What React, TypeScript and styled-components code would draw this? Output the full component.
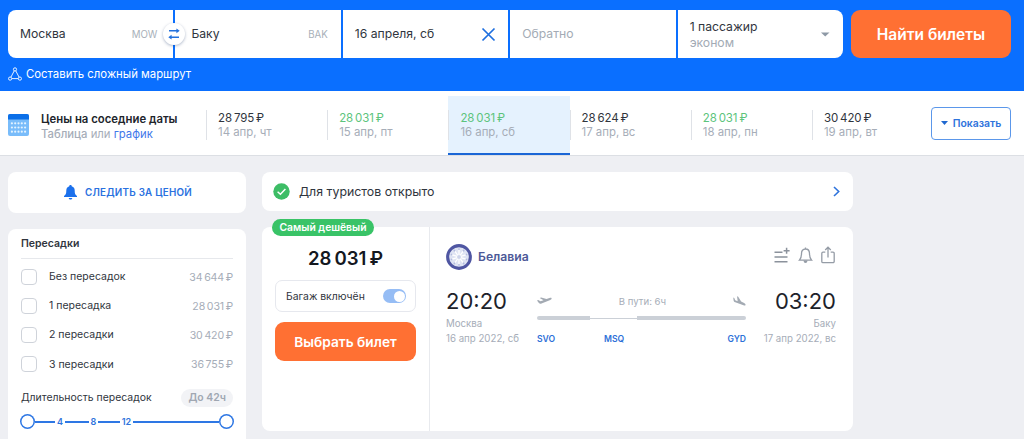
import React from "react";
import styled, { createGlobalStyle } from "styled-components";

const Global = createGlobalStyle`
  * { box-sizing: border-box; }
  html, body { margin: 0; height: 439px; overflow: hidden; background: #eeeff3; }
  body { font-family: Inter, "Liberation Sans", sans-serif; color: #30353d; }
  svg { display: block; flex: none; }
`;

const Page = styled.div`
  width: 1024px;
  height: 439px;
  overflow: hidden;
`;

const Header = styled.header`
  height: 91px;
  background: #0a6fff;
  padding: 10px 13px 0 8px;
`;

const SearchRow = styled.div`
  display: flex;
  gap: 8px;
  height: 48px;
`;

const FormWrap = styled.div`
  position: relative;
  height: 48px;
`;

const Form = styled.div`
  display: flex;
  gap: 2px;
  width: 835px;
  height: 48px;
  border-radius: 8px;
  overflow: hidden;
`;

const Field = styled.div`
  flex: 1 1 0;
  display: flex;
  align-items: center;
  justify-content: space-between;
  background: #fff;
  padding: 0 12px;
  font-size: 12.2px;
`;

const FieldText = styled.span<{ $muted?: boolean; $indent?: number }>`
  color: ${(p) => (p.$muted ? "#a3abb5" : "#30353d")};
  padding-left: ${(p) => p.$indent ?? 0}px;
  line-height: 16px;
  white-space: nowrap;
`;

const Code = styled.span<{ $inset: number }>`
  font-size: 9.7px;
  color: #a8b0b9;
  padding-right: ${(p) => p.$inset}px;
`;

const Passengers = styled.div`
  display: flex;
  flex-direction: column;
  padding-top: 1px;
`;

const Swap = styled.div`
  position: absolute;
  left: 155px;
  top: 13px;
  width: 22px;
  height: 22px;
  border-radius: 50%;
  background: #fff;
  box-shadow: 0 1px 3px rgba(20, 50, 100, 0.35);
  display: flex;
  align-items: center;
  justify-content: center;
`;

const OrangeButton = styled.button<{ $w: number; $h: number; $size: number }>`
  width: ${(p) => p.$w}px;
  height: ${(p) => p.$h}px;
  flex: none;
  border: 0;
  padding: 0;
  border-radius: 9px;
  background: #ff7033;
  color: #fff;
  font: 600 ${(p) => p.$size}px Inter, sans-serif;
`;

const ComplexRoute = styled.div`
  display: flex;
  align-items: center;
  gap: 4px;
  height: 16px;
  margin-top: 8px;
  color: #fff;
  font-size: 11.35px;
`;

const PriceBar = styled.section`
  display: flex;
  height: 65px;
  background: #fff;
  border-bottom: 1px solid #dcdfe4;
  padding: 5px 13px 0 8px;
`;

const PriceIntro = styled.div`
  display: flex;
  width: 198px;
  gap: 12px;
  padding-top: 15px;
`;

const CalendarWrap = styled.div`
  padding-top: 3px;
`;

const IntroTitle = styled.div`
  font-size: 11.35px;
  font-weight: 600;
  line-height: 16px;
  color: #20242b;
  white-space: nowrap;
`;

const IntroSub = styled.div`
  font-size: 11.3px;
  line-height: 15px;
  color: #a6adb8;
  b { font-weight: 500; }
  a { color: #3f78ea; }
`;

const Days = styled.div`
  display: flex;
  width: 725px;
`;

const Day = styled.div<{ $active?: boolean }>`
  width: 121.2px;
  flex: none;
  height: 59px;
  padding-top: 14px;
  background: ${(p) => (p.$active ? "#e5f2fe" : "transparent")};
  border-bottom: ${(p) => (p.$active ? "2px solid #1a66d6" : "0")};
`;

const DayInner = styled.div`
  height: 30px;
  border-left: 1px solid #dfe2e7;
  padding: 1px 0 0 11px;
`;

const DayPrice = styled.div<{ $cheap?: boolean }>`
  font-size: 11.5px;
  line-height: 14px;
  letter-spacing: -0.1px;
  color: ${(p) => (p.$cheap ? "#5cc47c" : "#30353d")};
`;

const DayDate = styled.div`
  font-size: 11.4px;
  line-height: 14px;
  color: #a6adb8;
`;

const ShowButton = styled.button`
  display: flex;
  align-items: center;
  justify-content: center;
  gap: 5px;
  width: 80px;
  height: 33px;
  margin-top: 11px;
  padding: 0 0 1px;
  border: 1px solid #5b97ea;
  border-radius: 4px;
  background: #fff;
  color: #2e73dc;
  font: 600 10.4px Inter, sans-serif;
`;

const Body = styled.main`
  display: flex;
  align-items: flex-start;
  gap: 16px;
  padding: 16px 0 0 8px;
`;

const Sidebar = styled.aside`
  width: 238px;
  display: flex;
  flex-direction: column;
  gap: 16px;
`;

const Watch = styled.button`
  display: flex;
  align-items: center;
  justify-content: center;
  gap: 8px;
  height: 41px;
  padding: 0 0 0 2px;
  border: 0;
  border-radius: 8px;
  background: #fff;
  color: #2a71e0;
  font: 600 9.8px Inter, sans-serif;
  letter-spacing: 0.25px;
`;

const Filters = styled.div`
  height: 230px;
  background: #fff;
  border-radius: 8px;
  padding: 0 13px;
`;

const FilterTitle = styled.div`
  height: 30px;
  line-height: 30px;
  font-size: 10.5px;
  font-weight: 600;
  border-bottom: 1px solid #e6e8ec;
  margin-bottom: 3px;
`;

const FilterRow = styled.label`
  display: flex;
  align-items: center;
  height: 29.2px;
  font-size: 10.5px;
`;

const Box = styled.span`
  width: 16px;
  height: 16px;
  border: 1px solid #cfd3da;
  border-radius: 4px;
  margin-right: 12px;
`;

const FilterPrice = styled.span`
  margin-left: auto;
  padding-top: 1px;
  font-size: 10.6px;
  letter-spacing: -0.15px;
  color: #a6adb8;
`;

const DurationRow = styled.div`
  display: flex;
  align-items: center;
  justify-content: space-between;
  height: 18px;
  margin-top: 10px;
  font-size: 10.45px;
`;

const Pill = styled.span`
  height: 18px;
  line-height: 18px;
  padding: 0 7px;
  border-radius: 9px;
  background: #f2f3f6;
  color: #a0a7b2;
  font-weight: 600;
`;

const Slider = styled.div`
  display: flex;
  align-items: center;
  height: 16px;
  margin: 7px -1px 0 -1px;
  color: #2e73dc;
  font-size: 9px;
  font-weight: 600;
`;

const Knob = styled.span`
  width: 15px;
  height: 15px;
  flex: none;
  box-shadow: inset 0 0 0 1.5px #2e77e4;
  border-radius: 50%;
`;

const Line = styled.span<{ $w?: number }>`
  height: 2px;
  background: #2e77e4;
  ${(p) => (p.$w ? `width: ${p.$w}px; flex: none;` : "flex: 1;")}
`;

const Tick = styled.span<{ $w: number }>`
  width: ${(p) => p.$w}px;
  flex: none;
  text-align: center;
`;

const Results = styled.div`
  width: 591px;
  display: flex;
  flex-direction: column;
  gap: 16px;
`;

const Notice = styled.div`
  display: flex;
  align-items: center;
  height: 39px;
  padding: 0 13px 0 11px;
  border-radius: 8px;
  background: #fff;
  font-size: 12.35px;
  gap: 9px;
  > svg:last-child { margin-left: auto; }
`;

const Ticket = styled.article`
  position: relative;
  display: flex;
  height: 204px;
  border-radius: 8px;
  background: #fff;
`;

const Badge = styled.span`
  position: absolute;
  left: 10px;
  top: -8px;
  width: 102px;
  height: 17px;
  line-height: 17px;
  text-align: center;
  border-radius: 9px;
  background: #39c367;
  color: #fff;
  font-size: 10.35px;
  font-weight: 600;
`;

const Offer = styled.div`
  width: 168px;
  border-right: 1px solid #e8eaee;
  padding: 19px 13px 0;
`;

const OfferPrice = styled.div`
  height: 24px;
  line-height: 24px;
  text-align: center;
  font-size: 18.6px;
  font-weight: 600;
  color: #14181f;
`;

const Baggage = styled.div`
  display: flex;
  align-items: center;
  justify-content: space-between;
  height: 32px;
  margin: 10px 0;
  padding: 0 9px 0 10px;
  border: 1px solid #e6e8ee;
  border-radius: 7px;
  font-size: 10.4px;
`;

const Toggle = styled.span`
  display: flex;
  justify-content: flex-end;
  width: 23px;
  height: 14px;
  padding: 1.5px;
  border-radius: 7px;
  background: #96bdf5;
  &::after {
    content: "";
    width: 11px;
    height: 11px;
    border-radius: 50%;
    background: #fff;
  }
`;

const Flight = styled.div`
  flex: 1;
  padding: 16px 17px 0 16px;
`;

const AirlineRow = styled.div`
  display: flex;
  align-items: center;
  height: 27px;
`;

const AirlineName = styled.span`
  margin-left: 6px;
  padding-bottom: 1px;
  font-size: 12.2px;
  font-weight: 600;
  color: #4d5998;
`;

const Actions = styled.div`
  display: flex;
  gap: 8px;
  margin: -3px 1px 0 auto;
`;

const Leg = styled.div`
  display: flex;
  margin-top: 17px;
`;

const Stop = styled.div<{ $right?: boolean }>`
  width: 82px;
  margin-left: ${(p) => (p.$right ? "auto" : "0")};
  display: flex;
  flex-direction: column;
  align-items: ${(p) => (p.$right ? "flex-end" : "flex-start")};
  white-space: nowrap;
`;

const Time = styled.div`
  font-size: 22px;
  line-height: 28px;
  margin-bottom: 2px;
  color: #1d222a;
`;

const Place = styled.div`
  font-size: 9.7px;
  line-height: 14.5px;
  color: #a6adb8;
`;

const Route = styled.div`
  width: 209px;
  margin-left: 9px;
`;

const RouteTop = styled.div`
  display: flex;
  align-items: center;
  justify-content: space-between;
  height: 14px;
  margin-top: 7px;
  color: #a6adb8;
  font-size: 9.6px;
`;

const Track = styled.div`
  display: flex;
  align-items: center;
  height: 4px;
  margin-top: 8px;
  border-radius: 2px;
  overflow: hidden;
`;

const Segment = styled.span<{ $w: number; $thin?: boolean }>`
  width: ${(p) => p.$w}px;
  height: ${(p) => (p.$thin ? 1 : 4)}px;
  background: #cbd0d7;
`;

const Airports = styled.div`
  display: grid;
  grid-template-columns: 67px 1fr auto;
  margin-top: 12px;
  line-height: 14px;
  color: #2e70d8;
  font-size: 8.6px;
  font-weight: 600;
`;

const days = [
  { price: "28\u2009795\u2009₽", date: "14 апр, чт" },
  { price: "28\u2009031\u2009₽", date: "15 апр, пт", cheap: true },
  { price: "28\u2009031\u2009₽", date: "16 апр, сб", cheap: true, active: true },
  { price: "28\u2009624\u2009₽", date: "17 апр, вс" },
  { price: "28\u2009031\u2009₽", date: "18 апр, пн", cheap: true },
  { price: "30\u2009420\u2009₽", date: "19 апр, вт" },
];

const stops = [
  ["Без пересадок", "34\u2009644\u2009₽"],
  ["1 пересадка", "28\u2009031\u2009₽"],
  ["2 пересадки", "30\u2009420\u2009₽"],
  ["3 пересадки", "36\u2009755\u2009₽"],
];

const SwapIcon = () => (
  <svg width="12" height="12" viewBox="0 0 12 12" fill="none" stroke="#2371dd" strokeWidth="1.4">
    <path d="M1 2.8h9M2 9.2h9" />
    <path d="M8.4.4 11.7 2.8 8.4 5.2zM3.6 6.8.3 9.2l3.3 2.4z" fill="#2371dd" stroke="none" />
  </svg>
);

const RouteIcon = () => (
  <svg width="14" height="14" viewBox="0 0 14 14" fill="none" stroke="#fff" strokeWidth="0.9">
    <circle cx="7" cy="2.4" r="1.6" />
    <circle cx="2.1" cy="11.6" r="1.6" />
    <circle cx="11.9" cy="11.6" r="1.6" />
    <path d="M6.2 3.9 2.9 10.2M7.8 3.9l3.3 6.3M3.8 11.6h6.4" />
  </svg>
);

const CalendarIcon = () => (
  <svg width="21" height="22" viewBox="0 0 21 22">
    <rect width="21" height="22" rx="2" fill="#79bcfa" />
    <path d="M2 0h17a2 2 0 0 1 2 2v3.5H0V2a2 2 0 0 1 2-2z" fill="#0b6fe8" />
    {[9.3, 13.5, 17.7].map((y) =>
      [3.9, 7.2, 10.5, 13.8, 17.1].map((x) => (
        <circle key={`${x}-${y}`} cx={x} cy={y} r="1.1" fill="#e4f3ff" />
      )),
    )}
  </svg>
);

const BellSolid = () => (
  <svg width="13" height="15" viewBox="0 0 13 15" fill="#1b70ec">
    <path d="M6.5 0c.8 0 1.2.5 1.2 1.2 2 .6 3 2.2 3 4.3 0 3 .5 4.3 2.3 5.6v1H0v-1c1.8-1.3 2.3-2.6 2.3-5.6 0-2.1 1-3.7 3-4.3C5.3.5 5.7 0 6.5 0zM4.7 12.9h3.6c-.2 1-.9 1.600-1.800 1.600s-1.600-.6-1.800-1.600z" />
  </svg>
);

const CheckIcon = () => (
  <svg width="17" height="17" viewBox="0 0 17 17" fill="none">
    <circle cx="8.5" cy="8.5" r="8.2" fill="#3dbd66" />
    <path d="M4.6 8.7 7.4 11.3 12.4 6" stroke="#fff" strokeWidth="1.5" />
  </svg>
);

const AirlineLogo = () => (
  <svg width="26" height="26" viewBox="0 0 27 27" fill="none">
    <circle cx="13.5" cy="13.5" r="11.8" fill="#dfe4f3" stroke="#4f56a2" strokeWidth="3.2" />
    {[0, 36, 72, 108, 144, 180, 216, 252, 288, 324].map((a) => (
      <g key={a} transform={`rotate(${a} 13.5 13.5)`}>
        <path d="M13.5 11.5V4.5" stroke="#fff" strokeWidth="1.3" />
        <circle cx="13.5" cy="5.3" r="1" fill="#b3bbde" />
      </g>
    ))}
    <circle cx="13.5" cy="13.5" r="1.8" fill="#cdd4ea" />
  </svg>
);

const ListPlusIcon = () => (
  <svg width="16" height="18" viewBox="0 0 16 18" fill="none" stroke="#8b929c" strokeWidth="1.5">
    <path d="M.5 6.2h8M.5 11h13M.5 15.8h13M9.6 4.8h6M12.6 1.8v6" />
  </svg>
);

const BellIcon = () => (
  <svg width="15" height="18" viewBox="0 0 15 18" fill="none" stroke="#959ca6" strokeWidth="1.3">
    <path d="M7.5 3c2.700 0 4 1.900 4 4.500 0 3.700.6 5.200 2.100 6.700H1.400c1.500-1.500 2.100-3 2.100-6.700C3.500 4.900 4.800 3 7.500 3zM7.500 3V1.400" />
    <path d="M5.500 14.600h4c-.2 1.700-.9 2.500-2 2.500s-1.800-.8-2-2.500z" fill="#959ca6" stroke="none" />
  </svg>
);

const ShareIcon = () => (
  <svg width="14" height="18" viewBox="0 0 14 18" fill="none" stroke="#959ca6" strokeWidth="1.3">
    <path d="M4.3 6.2H2A1.2 1.2 0 0 0 .8 7.400v8A1.200 1.200 0 0 0 2 16.600h10a1.200 1.200 0 0 0 1.200-1.200v-8A1.200 1.200 0 0 0 12 6.200H9.700M7 11.500V1.200M4.200 4 7 1.200 9.800 4" />
  </svg>
);

const TakeoffIcon = () => (
  <svg width="15" height="9" viewBox="0 0 15 9" fill="#a3aab3">
    <path d="M0 3.500 1.200 3l2.300 1.300 3-1.100L2.700.9 4.200.4l5.300 1.700 3-1.100c1-.3 1.900-.2 2.100.3.200.6-.4 1.200-1.300 1.600L4.500 6.600c-1.200.4-2 .1-2.600-.5z" />
  </svg>
);

const LandingIcon = () => (
  <svg width="13" height="11" viewBox="0 0 14 12" fill="#a3aab3">
    <path d="m.2 1.700 1.100.5 1 2.300 2.700 1.200L4.300.3l1.300.6 3.200 5.100 3.200 1.500c1.200.6 1.800 1.500 1.600 2.200-.3.700-1.200.7-2.200.3L2.400 6.900C1.100 6.200.6 5.400.5 4.500z" />
  </svg>
);

export default function App() {
  return (
    <Page>
      <Global />
      <Header>
        <SearchRow>
          <FormWrap>
            <Form>
              <Field>
                <FieldText>Москва</FieldText>
                <Code $inset={4}>MOW</Code>
              </Field>
              <Field>
                <FieldText $indent={4}>Баку</FieldText>
                <Code $inset={1}>BAK</Code>
              </Field>
              <Field>
                <FieldText>16 апреля, сб</FieldText>
                <svg width="15" height="15" viewBox="0 0 15 15" stroke="#1f6fdf" strokeWidth="1.7">
                  <path d="m1.5 1.5 12 12M13.5 1.5l-12 12" />
                </svg>
              </Field>
              <Field>
                <FieldText $muted>Обратно</FieldText>
              </Field>
              <Field>
                <Passengers>
                  <FieldText>1 пассажир</FieldText>
                  <FieldText $muted>эконом</FieldText>
                </Passengers>
                <svg width="12" height="5" viewBox="0 0 12 5" fill="#8e99a6">
                  <path d="M2 .5h8.500L6.200 4.500z" />
                </svg>
              </Field>
            </Form>
            <Swap>
              <SwapIcon />
            </Swap>
          </FormWrap>
          <OrangeButton $w={160} $h={48} $size={15.5}>Найти билеты</OrangeButton>
        </SearchRow>
        <ComplexRoute>
          <RouteIcon />
          Составить сложный маршрут
        </ComplexRoute>
      </Header>

      <PriceBar>
        <PriceIntro>
          <CalendarWrap>
            <CalendarIcon />
          </CalendarWrap>
          <div>
            <IntroTitle>Цены на соседние даты</IntroTitle>
            <IntroSub>
              <b>Таблица</b> или <a>график</a>
            </IntroSub>
          </div>
        </PriceIntro>
        <Days>
          {days.map((d) => (
            <Day key={d.date} $active={d.active}>
              <DayInner>
                <DayPrice $cheap={d.cheap}>{d.price}</DayPrice>
                <DayDate>{d.date}</DayDate>
              </DayInner>
            </Day>
          ))}
        </Days>
        <ShowButton>
          <svg width="7" height="4" viewBox="0 0 7 4" fill="#2068d0">
            <path d="M0 0h7L3.5 4z" />
          </svg>
          Показать
        </ShowButton>
      </PriceBar>

      <Body>
        <Sidebar>
          <Watch>
            <BellSolid />
            СЛЕДИТЬ ЗА ЦЕНОЙ
          </Watch>
          <Filters>
            <FilterTitle>Пересадки</FilterTitle>
            {stops.map(([label, price]) => (
              <FilterRow key={label}>
                <Box />
                {label}
                <FilterPrice>{price}</FilterPrice>
              </FilterRow>
            ))}
            <DurationRow>
              Длительность пересадок
              <Pill>До 42ч</Pill>
            </DurationRow>
            <Slider>
              <Knob />
              <Line $w={20} />
              <Tick $w={10}>4</Tick>
              <Line $w={24} />
              <Tick $w={9}>8</Tick>
              <Line $w={22} />
              <Tick $w={13}>12</Tick>
              <Line />
              <Knob />
            </Slider>
          </Filters>
        </Sidebar>

        <Results>
          <Notice>
            <CheckIcon />
            Для туристов открыто
            <svg width="7" height="11" viewBox="0 0 7 11" fill="none" stroke="#2e73dc" strokeWidth="1.6">
              <path d="m1 1 4.700 4.500L1 10" />
            </svg>
          </Notice>
          <Ticket>
            <Badge>Самый дешёвый</Badge>
            <Offer>
              <OfferPrice>{"28\u2009031\u2009₽"}</OfferPrice>
              <Baggage>
                Багаж включён
                <Toggle />
              </Baggage>
              <OrangeButton $w={141} $h={39} $size={13.7}>Выбрать билет</OrangeButton>
            </Offer>
            <Flight>
              <AirlineRow>
                <AirlineLogo />
                <AirlineName>Белавиа</AirlineName>
                <Actions>
                  <ListPlusIcon />
                  <BellIcon />
                  <ShareIcon />
                </Actions>
              </AirlineRow>
              <Leg>
                <Stop>
                  <Time>20:20</Time>
                  <Place>Москва</Place>
                  <Place>16 апр 2022, сб</Place>
                </Stop>
                <Route>
                  <RouteTop>
                    <TakeoffIcon />
                    В пути: 6ч
                    <LandingIcon />
                  </RouteTop>
                  <Track>
                    <Segment $w={53} />
                    <Segment $w={47} $thin />
                    <Segment $w={109} />
                  </Track>
                  <Airports>
                    <span>SVO</span>
                    <span>MSQ</span>
                    <span>GYD</span>
                  </Airports>
                </Route>
                <Stop $right>
                  <Time>03:20</Time>
                  <Place>Баку</Place>
                  <Place>17 апр 2022, вс</Place>
                </Stop>
              </Leg>
            </Flight>
          </Ticket>
        </Results>
      </Body>
    </Page>
  );
}
